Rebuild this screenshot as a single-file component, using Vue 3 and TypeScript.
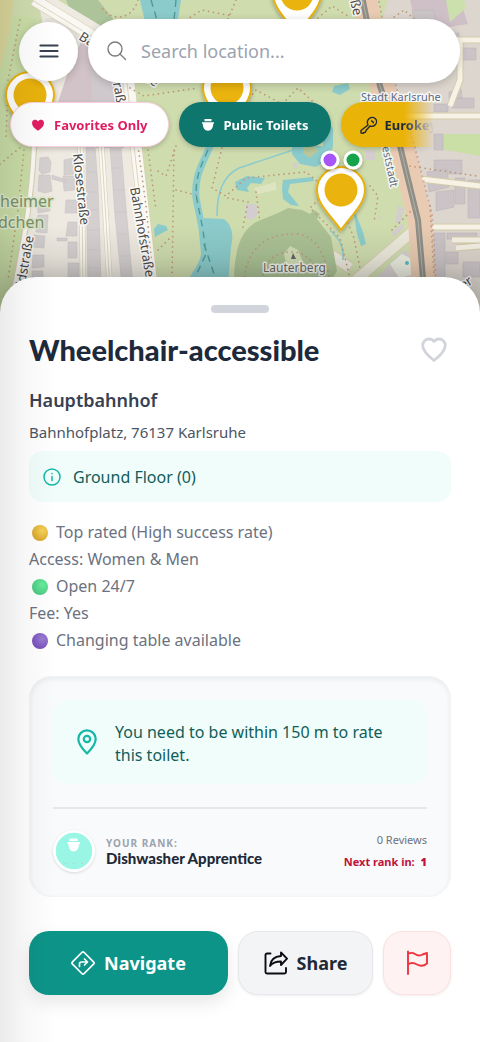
<script setup lang="ts">
import { ref } from 'vue'

interface Point { x: number; y: number }
interface Fact { text: string; tone?: 'gold' | 'green' | 'purple' }

const query = ref<string>('')

const pins: Point[] = [
  { x: 297, y: -6 },
  { x: 30, y: 95 },
  { x: 227, y: 88 },
  { x: 341, y: 190 },
]

const facts: Fact[] = [
  { text: 'Top rated (High success rate)', tone: 'gold' },
  { text: 'Access: Women & Men' },
  { text: 'Open 24/7', tone: 'green' },
  { text: 'Fee: Yes' },
  { text: 'Changing table available', tone: 'purple' },
]

const leftBlocks: string[] = [
  'M40 158l8-1 3 5-1 10-8 2-3-4z',
  'M39 175h11l2 16-7 2-7-2z',
  'M37 200l12 1 1 10-12 2z',
  'M38 215h10l-1 18-11-1z',
  'M34 235l11 1-1 12-11-1z',
  'M33 255h11v12l-12 1z',
  'M32 271h11v19H32z',
  'M64 160l10-2 2 16-12 1z',
  'M63 176h12v14l-11 1z',
  'M66 200h11v13H65z',
  'M68 222h9v14H66z',
  'M68 242h9v16h-9z',
  'M68 263h11v14H68z',
  'M52 175l14 5v3l-14-4z',
  'M57 238h10v3H57z',
]

const rightBlocks: string[] = [
  'M412 10h22l4 28-22 2z',
  'M447 34l12-1v20h-12z',
  'M462 48h14v12h-14z',
  'M434 160h28v14h-28z',
  'M427 172l20-3 2 18-20 5z',
  'M436 192l18-2v17l-18 4z',
  'M455 178h10v26h-10z',
  'M468 180h12v38h-12z',
  'M434 233h11v45h-11z',
  'M447 233h30v6h-30z',
  'M446 252h12v12h-12z',
  'M463 262h17v15h-17z',
  'M434 104h14v8h-14z',
  'M452 98h22v10h-22z',
  'M434 134h9v16h-9z',
  'M449 92l12-3 1 9-13 1z',
]
</script>

<template>
  <div class="app">
    <svg class="map" viewBox="0 0 480 320" preserveAspectRatio="xMidYMin slice" role="img" aria-label="Map of Karlsruhe">
      <defs>
        <linearGradient id="mapShade" x1="0" y1="0" x2="0" y2="1">
          <stop offset="0" stop-color="#000" stop-opacity="0" />
          <stop offset="1" stop-color="#000" stop-opacity="0.2" />
        </linearGradient>
        <filter id="pinShadow" x="-30%" y="-30%" width="160%" height="160%">
          <feDropShadow dx="0" dy="2" stdDeviation="2" flood-opacity="0.3" />
        </filter>
      </defs>

      <rect width="480" height="320" fill="#cfdcae" />
      <path d="M0 0h14L5 60 0 70z" fill="#d9d59a" />
      <path d="M66 0h32l16 20-14 8-30-18z" fill="#adc49a" />

      <!-- residential quarter -->
      <path d="M38 0h20l80 48-14 34 8 58 16 90 8 90H10L28 180 34 120 50 60z" fill="#eeeae1" />
      <path d="M14 16l22 2-4 22 20 12-14 90-8 60-22 100H0V70z" fill="#c9dca6" />
      <path d="M46 18h10l36 22-8 44-34-34z" fill="#e6e3dc" />
      <path d="M82 40l26 20 4 42H58l14-42z" fill="#d2c3c8" />
      <path d="M90 60l24 18 10 70H96z" fill="#cfc9cd" />
      <g fill="#d5d0d0" stroke="#c9c2c2" stroke-width="0.6">
        <path v-for="d in leftBlocks" :key="d" :d="d" />
        <path d="M86 146h9l3 40 2 60 1 40H88l-1-60z" />
        <path d="M110 146h11l4 50 8 90h-11l-7-70z" />
        <path d="M86 172h11M86 192h12M87 210h12M87 230h13M88 250h12M88 268h12M112 168h11M113 190h12M115 212h12M118 234h11M120 256h11" />
      </g>
      <g fill="none" stroke="#d5cdb2">
        <path d="M34 146C32 200 22 250 14 290" stroke-width="6" />
        <path d="M80 140l2 60 1 90M101 140l5 80 4 70" stroke-width="6" />
        <path d="M34 0l92 56 10 90 16 140" stroke-width="12" />
      </g>
      <g fill="none" stroke="#faf8f2">
        <path d="M34 146C32 200 22 250 14 290" stroke-width="4" />
        <path d="M80 140l2 60 1 90M101 140l5 80 4 70" stroke-width="5" />
        <path d="M34 0l92 56 10 90 16 140" stroke-width="11" />
      </g>
      <g fill="none" stroke="#ddd6c0" stroke-width="1">
        <path d="M80 140l2 60 1 90M101 140l5 80 4 70M32 0l92 56 10 90 16 140" />
      </g>

      <!-- city blocks east of the railway -->
      <path d="M388 0h92v320H398l18-40-2-60-24-80-20-80z" fill="#ddd6cf" />
      <path d="M410 0h50l8 24-50 8z" fill="#cfc0c8" />
      <path d="M434 134h46v22l-44-8z" fill="#c9dfa6" />
      <path d="M446 0h18l2 8-16 14z" fill="#cbe0ad" />
      <g fill="#cbc4c6" stroke="#bdb5b8" stroke-width="0.6">
        <path v-for="d in rightBlocks" :key="d" :d="d" />
      </g>
      <g fill="none" stroke="#d4cba9" stroke-width="7">
        <path d="M400 116h80M412 178l68 8M420 227h60M452 240h28M456 248l24-2M460 40v40l-10 26M440 40h40" />
      </g>
      <g fill="none" stroke="#f6f2e6" stroke-width="5">
        <path d="M400 116h80M412 178l68 8M420 227h60M452 240h28M456 248l24-2M460 40v40l-10 26M440 40h40" />
      </g>

      <path d="M350 268l-26-18M356 280l70-60" fill="none" stroke="#d8d0b0" stroke-width="12" />
      <path d="M350 268l-26-18M356 280l70-60" fill="none" stroke="#ece9dc" stroke-width="10" />
      <path d="M372 282l32-32 12 8v30h-46z" fill="#d6cfd0" />
      <path d="M390 264l12-10 12 6 1 14-16 4z" fill="#eceee0" />
      <circle cx="407" cy="263" r="2" fill="#58bcc4" />

      <!-- railway -->
      <path d="M364 -4l18 90 20 60 18 74 4 70" fill="none" stroke="#e8cbb2" stroke-width="24" />
      <path d="M362 -4l18 90 20 60 18 74 6 70" fill="none" stroke="#8f8f88" stroke-width="6" />
      <path d="M362 -4l18 90 20 60 18 74 6 70" fill="none" stroke="#b3b0a8" stroke-width="1" />
      <path d="M378 -4l16 84 20 64 18 70 4 76" fill="none" stroke="#c88f74" stroke-width="2" stroke-dasharray="2 3" opacity="0.6" />

      <!-- park -->
      <path d="M234 284c0-34 6-52 22-62l22-9 10-5 14 2 8 4 4-4 6 4-3 5 14 18 6 34-14 24z" fill="#abc194" />
      <path d="M284 254l6-8 8 4 4 10-6 6-10-2z" fill="#d1dcb4" />
      <path d="M293 253l3 6h-5z" fill="#666" />
      <g fill="#8ccbcb">
        <path d="M140 0h41l-4 26h-31z" />
        <path d="M292 146h41l-3 12-14 9-16-3-8-10z" />
        <path d="M324 118l9 10v18h-10z" />
        <path d="M235 182l12-6 18 2-4 6-10-1-4 5 2 4-12-2z" />
        <path d="M283 180l30-3 1 4-24 3-2 8 8 10 3 4-8-1-8-6-1-10z" />
        <path d="M355 212l8 20 3 12-5 2-4-12-3-20z" />
        <path d="M158 224l8 2 2 4-8 4-5 3-1-8z" />
        <path d="M334 86l14-3 2 6-10 6-8-3z" />
      </g>
      <path d="M304 146l10-2 4 7-8 7-7-5z" fill="#b9c79a" />
      <path d="M204 218l20 1c8 6 10 16 7 28l-3 38h-42c6-14 12-18 15-30z" fill="#8ccbcb" />
      <path d="M210 146c-8 20-16 30-14 52l6 30 4 40" fill="none" stroke="#8ccbcb" stroke-width="7" />
      <path d="M208 150c-8 18-14 30-11 50l6 30 3 24-14 30M204 244l10 30M151 0l6 20M176 0l-2 20" fill="none" stroke="#4f9c97" stroke-width="1.4" stroke-dasharray="7 5" />
      <path d="M217 216c0-24 6-40 22-48l54-18M330 230c8 8 14 14 13 30" fill="none" stroke="#8ccbcb" stroke-width="1.6" />
      <g fill="#d3cdcf">
        <path d="M246 204h10l2 10-6 6-6-2z" />
        <path d="M366 150h9v10h-9zM398 206l6 2-4 16-5-2zM392 232l10-8 2 3-10 10z" />
        <path d="M378 215l3 2-2 3zM292 164l6-2-2 8z" />
      </g>
      <path d="M254 188l22-6v8l-18 4z" fill="#dde4c2" />
      <g fill="none" stroke="#bd9678" stroke-width="1.7" stroke-linecap="round" stroke-dasharray="0.1 5">
        <path d="M138 0c-6 20-26 22-36 8M186 20l16-10 30 6M236 0l-10 24" />
        <path d="M20 20L8 80 6 140M24 150l-6 60-10 70M0 164l22-18" />
        <path d="M138 146l8 60 8 80M148 150l8 60M174 150l-2 130M158 250l14-14" />
        <path d="M130 88l14 8 54-8M176 146l-10 30-10-6M176 190l24 6" />
        <path d="M222 148l-10 40 14 8 20-18 60-6 22 18M228 198l20 4-6 30M256 192l4 30" />
        <path d="M244 282c2-30 18-48 50-48 24 0 32 24 36 48M262 280c4-20 12-28 30-28 16 0 22 12 28 28" />
        <path d="M246 102l10-12 26 14 16-16 22 20M322 196l-12 12 30 30 10 40M346 218l8 20 6 30M370 186l8 10-4 26" />
        <path d="M410 166l66 10M430 206l4 70M392 230l24-24" />
        <path d="M318 18l14-12 16 10M300 8l10 10M390 20l14-10 16 14" />
      </g>

      <g class="street">
        <text x="78" y="39" transform="rotate(32 78 39)">Bahnhofstraße</text>
        <text x="113" y="83" transform="rotate(80 113 83)">raße</text>
        <text x="73" y="154" transform="rotate(84 73 154)">Klosestraße</text>
        <text x="130" y="188" transform="rotate(80 130 188)">Bahnhofstraße</text>
        <text x="25" y="286" transform="rotate(-80 25 286)">ldstraße</text>
        <text x="350" y="1" transform="rotate(76 350 1)">ße</text>
        <text x="463" y="290" transform="rotate(-34 463 290)">er</text>
      </g>
      <g class="district">
        <text x="361" y="101">Stadt Karlsruhe</text>
        <text x="382" y="147" transform="rotate(78 382 147)">eststadt</text>
      </g>
      <text class="hill" x="263" y="272">Lauterberg</text>
      <g class="wood">
        <text x="0" y="207">heimer</text>
        <text x="-2" y="228">dchen</text>
      </g>

      <rect y="226" width="480" height="94" fill="url(#mapShade)" />

      <g v-for="p in pins" :key="`${p.x}-${p.y}`" filter="url(#pinShadow)">
        <g :transform="`translate(${p.x} ${p.y})`">
          <path d="M0 40C-10 26-24 14-24 0A24 23 0 0 1 24 0C24 14 10 26 0 40z" fill="#fff" stroke="#e8b00a" stroke-width="2" />
          <circle r="16.5" fill="#eab308" />
        </g>
      </g>
      <g stroke="#fff" stroke-width="3" filter="url(#pinShadow)">
        <circle cx="330" cy="160" r="8" fill="#a855f7" />
        <circle cx="353" cy="160" r="8" fill="#16a34a" />
      </g>
    </svg>

    <header class="top">
      <div class="bar">
        <button class="menu" type="button" aria-label="Menu">
          <svg width="20" height="16" viewBox="0 0 20 16" fill="none" stroke="#374151" stroke-width="2.2" stroke-linecap="round">
            <path d="M1.5 2.500h17M1.500 8h17M1.500 13.500h17" />
          </svg>
        </button>
        <label class="search">
          <svg width="20" height="20" viewBox="0 0 20 20" fill="none" stroke="#7c7c78" stroke-width="1.4" stroke-linecap="round">
            <circle cx="8" cy="8" r="7" />
            <path d="M13 13l5.500 5.500" />
          </svg>
          <input v-model="query" type="text" placeholder="Search location..." aria-label="Search location" />
        </label>
      </div>
      <nav class="chips" aria-label="Filters">
        <button class="chip fav" type="button">
          <svg width="14" height="14" viewBox="0 0 14 14" fill="#e11d62">
            <path d="M7 12.800C3.600 10.600 1 8 1 5a3.200 3.200 0 0 1 6-1.600A3.200 3.200 0 0 1 13 5c0 3-2.600 5.600-6 7.800z" />
          </svg>
          Favorites Only
        </button>
        <button class="chip public" type="button">
          <svg width="14" height="14" viewBox="0 0 14 14" fill="#fff">
            <path d="M3.500 1h7v2.200h-7zM1 4.200h12v1.500h-.8c0 3.800-1.800 7-5.200 7s-5.200-3.200-5.200-7H1z" />
          </svg>
          Public Toilets
        </button>
        <button class="chip euro" type="button">
          <svg width="18" height="18" viewBox="0 0 18 18" fill="none" stroke="#1f2937" stroke-width="1.4" stroke-linejoin="round" stroke-linecap="round">
            <path d="M8 9c-1.200-2.500-.5-5 1.300-6.500 1.900-1.500 4.600-1.200 6.100.3 1.500 1.600 1.500 4.200-.1 5.900-1.500 1.600-3.500 2-5.300 1.300L6 14.500l-.6 1.800-1.500.2-.6.700-2.300-.2v-2.500z" />
            <path d="M11.500 5c1 .2 1.700.9 1.900 1.900" />
          </svg>
          Eurokey
        </button>
      </nav>
    </header>

    <main class="sheet">
      <span class="handle"></span>
      <div class="head">
        <h1>Wheelchair-accessible</h1>
        <button class="like" type="button" aria-label="Add to favorites">
          <svg width="26" height="26" viewBox="0 0 26 26" fill="none" stroke="#d1d5db" stroke-width="2.8" stroke-linejoin="round">
            <path d="M13 23.500C6 18 1.700 13.500 1.700 8.500A6.300 6.300 0 0 1 8 2c2 0 3.800.9 5 2.500C14.200 2.900 16 2 18 2a6.300 6.300 0 0 1 6.300 6.500c0 5-4.300 9.500-11.300 15z" />
          </svg>
        </button>
      </div>
      <h2>Hauptbahnhof</h2>
      <p class="address">Bahnhofplatz, 76137 Karlsruhe</p>
      <p class="floor">
        <svg width="18" height="18" viewBox="0 0 18 18" fill="none" stroke="#14b8a6" stroke-width="1.5" stroke-linecap="round">
          <circle cx="9" cy="9" r="8" />
          <path d="M9 8.500v4M9 5.500v.2" />
        </svg>
        Ground Floor (0)
      </p>
      <ul class="facts">
        <li v-for="f in facts" :key="f.text">
          <span v-if="f.tone" class="ball" :class="f.tone"></span>{{ f.text }}
        </li>
      </ul>

      <section class="card">
        <div class="notice">
          <svg width="20" height="26" viewBox="0 0 20 26" fill="none" stroke="#14b8a6" stroke-width="2.2" stroke-linejoin="round">
            <path d="M10 24.500C5 19.500 1.300 15 1.300 10a8.700 8.700 0 0 1 17.400 0c0 5-3.700 9.500-8.700 14.500z" />
            <circle cx="10" cy="10" r="3.200" />
          </svg>
          <p>You need to be within 150 m to rate this toilet.</p>
        </div>
        <div class="rank">
          <svg class="avatar" width="42" height="42" viewBox="0 0 42 42">
            <circle cx="21" cy="21" r="19.500" fill="#99f6e4" stroke="#fff" stroke-width="2.500" />
            <path d="M16.500 8.500h8v2.500h-8zM14.500 12h12.500v2h-1c0 4-2 7.500-5.300 7.500s-5.200-3.500-5.200-7.500h-1z" fill="#fff" />
            <path d="M12 33.500h2M20 33.500h2M28 33.500h2" stroke="#b4d6d0" stroke-width="1" />
          </svg>
          <div class="who">
            <span class="label">YOUR RANK:</span>
            <strong>Dishwasher Apprentice</strong>
          </div>
          <div class="score">
            <span>0 Reviews</span>
            <span class="next">Next rank in: <b>1</b></span>
          </div>
        </div>
      </section>

      <div class="actions">
        <button class="action navigate" type="button">
          <svg width="24" height="24" viewBox="0 0 24 24" fill="none" stroke="#fff" stroke-width="1.7" stroke-linejoin="round" stroke-linecap="round">
            <path d="M10.800 1.500a1.700 1.700 0 0 1 2.400 0l9.300 9.300a1.700 1.700 0 0 1 0 2.400l-9.300 9.300a1.700 1.700 0 0 1-2.400 0L1.500 13.200a1.700 1.700 0 0 1 0-2.400z" />
            <path d="M8.500 15.500V13a2 2 0 0 1 2-2h5.500M13.500 8l3 3-3 3" />
          </svg>
          Navigate
        </button>
        <button class="action share" type="button">
          <svg width="24" height="24" viewBox="0 0 24 24" fill="none" stroke="#0a0d14" stroke-width="1.9" stroke-linejoin="round" stroke-linecap="round">
            <path d="M6.500 2.500H3a1.500 1.500 0 0 0-1.500 1.500v17A1.500 1.500 0 0 0 3 22.500h17.500a1.500 1.500 0 0 0 1.500-1.500v-4" />
            <path d="M17 1.500l6 6.200-6 6.300v-3.500c-5 0-8.500 1-11 4.500C6.500 9 10.500 5.500 17 5z" />
          </svg>
          Share
        </button>
        <button class="action report" type="button" aria-label="Report a problem">
          <svg width="24" height="26" viewBox="0 0 24 26" fill="none" stroke="#ef3340" stroke-width="1.9" stroke-linejoin="round" stroke-linecap="round">
            <path d="M3 1.500v22.500M3 4c2.500-1.500 4.800-1.600 7 0s5 2 7.500.5l4.500-1.500v10.500c-3 2.500-7 2.800-10 1S5.500 12.500 3 14.500" />
          </svg>
        </button>
      </div>
    </main>
    <div class="edge"></div>
  </div>
</template>

<style>
body {
  margin: 0;
  background: #fff;
}
</style>

<style scoped>
.app {
  position: relative;
  display: flex;
  flex-direction: column;
  min-height: 100vh;
  overflow: hidden;
  background: #fff;
  color: #4b5563;
  font-family: "Noto Sans", "Open Sans", sans-serif;
  box-sizing: border-box;
}
*, *::before, *::after { box-sizing: inherit; }
h1, h2, p, ul { margin: 0; padding: 0; font-weight: 400; }
button { font-family: inherit; cursor: pointer; padding: 0; border: 0; }
svg { flex: none; display: block; }

.map {
  position: absolute;
  top: 0;
  left: 0;
  width: 100%;
  height: 320px;
}
.map text {
  paint-order: stroke;
  stroke: #fffc;
  stroke-width: 3px;
  stroke-linejoin: round;
}
.street { font-size: 13px; fill: #4c4a48; }
.district { font-size: 11px; fill: #5b6b83; }
.hill { font-size: 12px; fill: #6e6c66; }
.wood { font-size: 16px; fill: #7b9068; }
.map .wood text { stroke: #dce6c8; }

.top {
  position: relative;
  padding-top: 19px;
  height: 277px;
}
.bar {
  display: flex;
  align-items: center;
  gap: 10px;
  padding: 0 20px 0 19px;
}
.menu {
  display: grid;
  place-items: center;
  flex: none;
  width: 59px;
  height: 59px;
  border-radius: 50%;
  background: #fff;
  box-shadow: 0 2px 8px #0003;
}
.search {
  display: flex;
  align-items: center;
  flex: 1;
  min-width: 0;
  gap: 14px;
  height: 64px;
  padding: 0 19px;
  border-radius: 32px;
  background: #fff;
  box-shadow: 0 2px 8px #0003;
}
.search input {
  flex: 1;
  min-width: 0;
  padding: 0;
  border: 0;
  outline: 0;
  background: none;
  font: 400 18px "Noto Sans", sans-serif;
  color: #1f2937;
}
.search input::placeholder { color: #9ca3af; opacity: 1; }
.chips {
  display: flex;
  gap: 10px;
  margin-top: 13px;
  margin-right: 46px;
  padding: 6px 0 8px 10px;
  overflow: hidden;
  -webkit-mask-image: linear-gradient(to right, #000 calc(100% - 30px), transparent);
  mask-image: linear-gradient(to right, #000 calc(100% - 30px), transparent);
}
.chip {
  display: flex;
  flex: none;
  align-items: center;
  gap: 9px;
  height: 45px;
  padding: 0 20px;
  border-radius: 23px;
  font-size: 13px;
  font-weight: 700;
  box-shadow: 0 2px 5px #0003;
}
.fav { background: #fff; color: #e11d62; border: 1px solid #fbcfe0; }
.public { background: #0f766e; color: #fff; padding: 0 22px; }
.euro { background: #eab308; color: #1f2937; gap: 7px; padding-left: 19px; }

.sheet {
  position: relative;
  display: flex;
  flex-direction: column;
  flex: 1;
  padding: 28px 29px 47px;
  border-radius: 36px 36px 0 0;
  background: #fff;
  box-shadow: 0 -4px 20px #0002;
}
.handle {
  align-self: center;
  width: 58px;
  height: 8px;
  border-radius: 4px;
  background: #d1d5db;
}
.head {
  display: flex;
  align-items: center;
  justify-content: space-between;
  height: 40px;
  margin-top: 17px;
  padding-right: 4px;
}
h1 {
  font: 900 29px/40px Lato, sans-serif;
  color: #1e293b;
}
.like { background: none; }
h2 {
  margin-top: 17px;
  font-size: 18px;
  line-height: 27px;
  font-weight: 600;
  color: #374151;
}
.address {
  margin-top: 6px;
  font-size: 15px;
  line-height: 24px;
}
.floor {
  display: flex;
  align-items: center;
  gap: 12px;
  height: 51px;
  margin-top: 7px;
  padding: 0 14px;
  border-radius: 14px;
  background: #f0fdfa;
  color: #115e59;
  font-size: 16px;
}
.facts {
  margin-top: 17px;
  list-style: none;
  font-size: 16px;
  line-height: 27px;
  color: #6b7280;
}
.facts li { display: flex; align-items: center; }
.ball {
  width: 16px;
  height: 16px;
  margin: 0 8px 0 3px;
  border-radius: 50%;
}
.gold { background: radial-gradient(circle at 65% 35%, #f8d458, #dfae35 60%, #c79a30); }
.green { background: radial-gradient(circle at 65% 35%, #68ee9b, #51d088 60%, #4aa97b); }
.purple { background: radial-gradient(circle at 65% 35%, #9b7fd0, #7f57c2 60%, #6a48a8); }

.card {
  margin-top: 22px;
  padding: 23px;
  border: 1px solid #f3f4f6;
  border-radius: 22px;
  background: #f9fafb;
  box-shadow: inset 0 2px 5px #00000012;
}
.notice {
  display: flex;
  align-items: center;
  gap: 18px;
  min-height: 84px;
  padding: 0 24px;
  border-radius: 16px;
  background: #f0fdfa;
  color: #115e59;
  font-size: 16px;
  line-height: 23px;
}
.notice p { padding-top: 3px; }
.rank {
  display: flex;
  align-items: center;
  margin-top: 23px;
  padding-top: 20px;
  border-top: 2px solid #e5e7eb;
}
.avatar {
  margin-right: 11px;
  border-radius: 50%;
  box-shadow: 0 1px 3px #0002;
}
.who, .score { display: flex; flex-direction: column; }
.label {
  font-size: 10px;
  line-height: 14px;
  font-weight: 700;
  letter-spacing: 1px;
  color: #9ca3af;
}
.who strong {
  font: 900 15px/16px Lato, sans-serif;
  color: #1f2937;
}
.score {
  margin-left: auto;
  align-items: flex-end;
  font-size: 11px;
  line-height: 22px;
  color: #6b7280;
}
.next {
  font-weight: 700;
  color: #be123c;
}
.next b { margin-left: 3px; }

.actions {
  display: flex;
  gap: 10px;
  margin-top: 34px;
}
.action {
  display: flex;
  align-items: center;
  justify-content: center;
  gap: 9px;
  height: 64px;
  border-radius: 20px;
  font-size: 18px;
  font-weight: 700;
}
.navigate {
  flex: 1;
  background: #0d9488;
  color: #fff;
  box-shadow: 0 8px 18px #00000018;
}
.share {
  width: 135px;
  border: 1px solid #e5e7eb;
  background: #f3f4f6;
  color: #1f2937;
  box-shadow: 0 1px 3px #0001;
}
.report {
  width: 68px;
  border: 1px solid #fde0e0;
  background: #fef2f2;
  box-shadow: 0 1px 3px #0001;
}
.edge {
  position: absolute;
  top: 0;
  bottom: 0;
  left: 0;
  width: 56px;
  background: linear-gradient(to right, #00000014, #00000008 45%, #0000);
  pointer-events: none;
}
</style>
